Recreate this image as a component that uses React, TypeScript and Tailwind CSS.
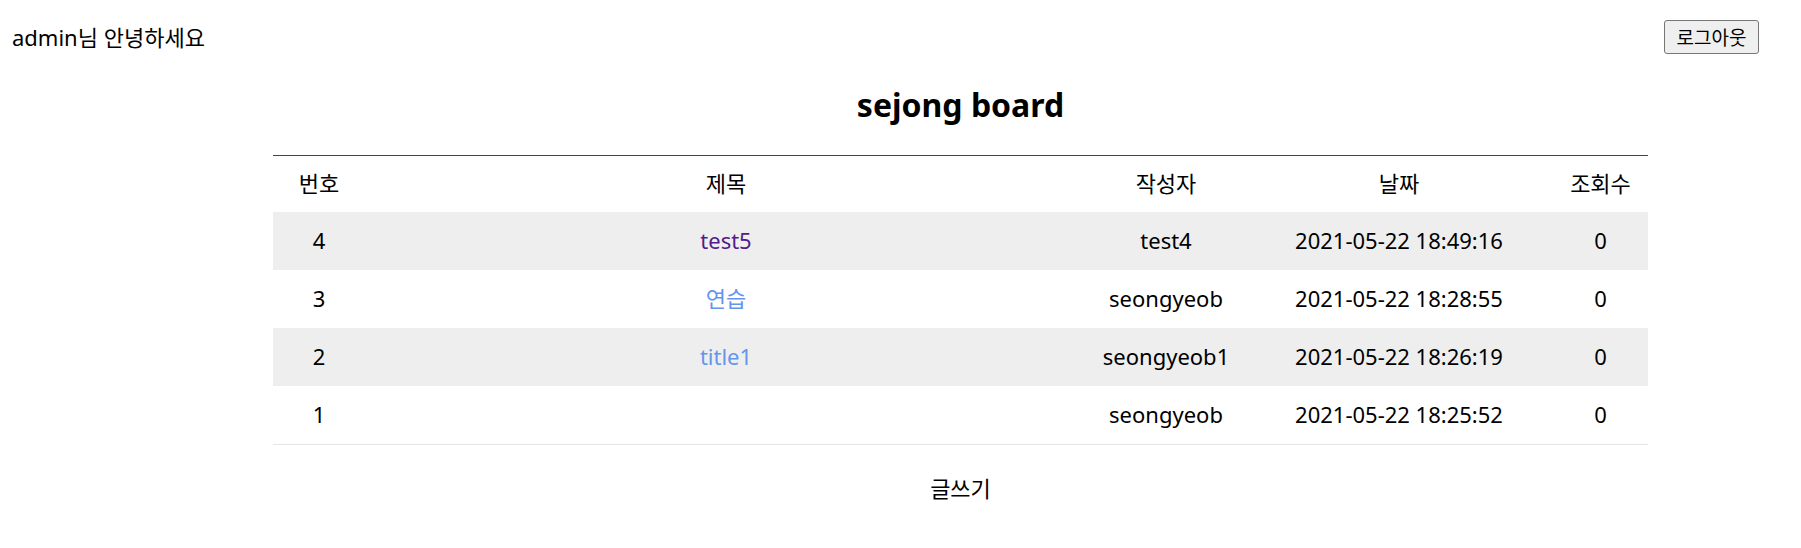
import React from "react";

type Post = {
  id: number;
  title: string;
  author: string;
  date: string;
  views: number;
  visited?: boolean;
};

const posts: Post[] = [
  { id: 4, title: "test5", author: "test4", date: "2021-05-22 18:49:16", views: 0, visited: true },
  { id: 3, title: "연습", author: "seongyeob", date: "2021-05-22 18:28:55", views: 0 },
  { id: 2, title: "title1", author: "seongyeob1", date: "2021-05-22 18:26:19", views: 0 },
  { id: 1, title: "", author: "seongyeob", date: "2021-05-22 18:25:52", views: 0 },
];

export default function App() {
  return (
    <div className="min-h-[548px] w-full bg-white text-[22px] text-black font-['Noto_Sans','Noto_Sans_CJK_KR',sans-serif]">
      {/* Top bar */}
      <div className="flex h-[54px] items-start justify-between pl-[12px] pr-[42px]">
        <p className="pt-[22px] leading-[30px]">admin님 안녕하세요</p>
        <button
          type="button"
          className="mt-[20px] flex h-[34px] w-[95px] items-center justify-center rounded-[3px] border border-[#767676] bg-[#efefef] text-[19px] leading-[20px] font-['Noto_Sans_CJK_KR',sans-serif]"
        >
          로그아웃
        </button>
      </div>

      {/* Board */}
      <div className="ml-[273px] w-[1375px]">
        <h1 className="mt-[31px] text-center text-[32px] font-bold leading-[40px]">sejong board</h1>

        <table className="mt-[30px] w-full table-fixed border-collapse border-t border-[#444444] text-center">
          <colgroup>
            <col className="w-[92px]" />
            <col className="w-[722px]" />
            <col className="w-[158px]" />
            <col className="w-[308px]" />
            <col className="w-[95px]" />
          </colgroup>
          <thead>
            <tr className="h-[56px]">
              <th className="font-normal">번호</th>
              <th className="font-normal">제목</th>
              <th className="font-normal">작성자</th>
              <th className="font-normal">날짜</th>
              <th className="font-normal">조회수</th>
            </tr>
          </thead>
          <tbody>
            {posts.map((post, i) => (
              <tr
                key={post.id}
                className={i % 2 === 0 ? "h-[58px] bg-[#eeeeee]" : "h-[58px] bg-white"}
              >
                <td>{post.id}</td>
                <td className={post.visited ? "text-[#551a8b]" : "text-[#6495ed]"}>{post.title}</td>
                <td>{post.author}</td>
                <td>{post.date}</td>
                <td>{post.views}</td>
              </tr>
            ))}
          </tbody>
        </table>
        <div className="border-t border-[#e6e6e6]" />

        <p className="mt-[28px] text-center leading-[30px]">글쓰기</p>
      </div>
    </div>
  );
}
